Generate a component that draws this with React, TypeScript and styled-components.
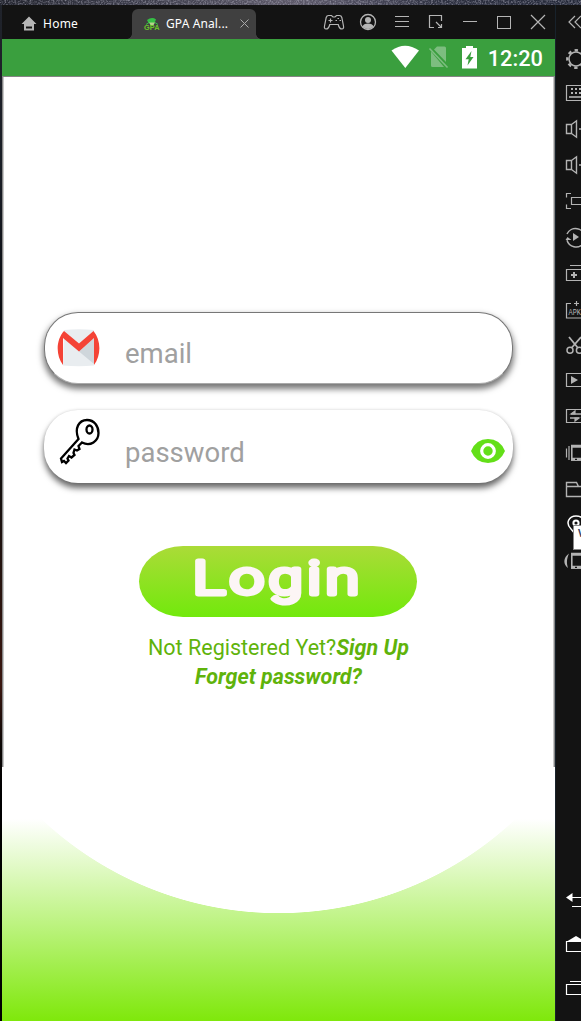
import React from 'react';
import styled, { createGlobalStyle, css } from 'styled-components';

const Global = createGlobalStyle`
  * { box-sizing: border-box; }
  body { margin: 0; background: #131313; overflow: hidden; }
  svg { display: block; flex: none; }
  button, input { font: inherit; border: 0; background: none; padding: 0; margin: 0; }
`;

const Desktop = styled.div`
  width: 581px;
  height: 1021px;
  overflow: hidden;
  display: flex;
  flex-direction: column;
  background: #131313;
  font-family: Roboto, sans-serif;
`;

const Wallpaper = styled.div`
  height: 5px;
  flex: none;
  overflow: hidden;
  background: linear-gradient(90deg, #23252f 0%, #393a48 22%, #5c5868 50%, #4b4a5c 62%, #2d3040 76%, #252a3a 100%);
`;

const Emulator = styled.div`
  display: flex;
  flex: 1;
  min-height: 0;
`;

const DesktopEdge = styled.div`
  width: 2px;
  background: linear-gradient(180deg, #20232b 0, #191d25 180px, #05070b 340px, #14100f 480px, #3a1710 680px, #0b0705 740px, #000 790px);
`;

const Main = styled.div`
  width: 553px;
  display: flex;
  flex-direction: column;
`;

const TitleBar = styled.header`
  height: 34px;
  flex: none;
  display: flex;
  align-items: flex-end;
  background: #131313;
  font-family: 'Noto Sans', sans-serif;
  font-size: 12px;
  color: #fff;
`;

const HomeTab = styled.div`
  width: 130px;
  height: 30px;
  padding: 0 0 1px 19px;
  display: flex;
  align-items: center;
  gap: 6px;
  letter-spacing: 0.25px;
`;

const ActiveTab = styled.div`
  position: relative;
  width: 124px;
  height: 30px;
  padding: 0 7px 1px 12px;
  display: flex;
  align-items: center;
  background: #404040;
  border-radius: 6px 6px 0 0;
  &::before, &::after {
    content: '';
    position: absolute;
    bottom: 0;
    width: 5px;
    height: 5px;
  }
  &::before {
    left: -5px;
    background: radial-gradient(circle at 0 0, transparent 4.5px, #404040 5px);
  }
  &::after {
    right: -5px;
    background: radial-gradient(circle at 100% 0, transparent 4.5px, #404040 5px);
  }
`;

const TabTitle = styled.span`
  width: 76px;
  margin-left: 6px;
  white-space: nowrap;
  letter-spacing: 0.12px;
`;

const WindowTools = styled.div`
  margin-left: auto;
  height: 34px;
`;

const StatusBar = styled.div`
  height: 37px;
  flex: none;
  display: flex;
  align-items: center;
  justify-content: flex-end;
  padding-right: 12px;
  background: #3a9f3e;
  color: #fff;
  font-size: 21.8px;
  font-weight: 500;
`;

const Clock = styled.span`
  margin-left: 11px;
  padding-top: 1px;
  line-height: 37px;
`;

const Screen = styled.main`
  flex: 1;
  display: flex;
  flex-direction: column;
  background: #fff;
`;

const FormPanel = styled.form`
  height: 691px;
  flex: none;
  padding: 235px 41px 0 41px;
  border: solid #858585;
  border-width: 1px 1px 0;
  box-shadow: inset 1px 0 #c8c8c8, inset -1px 0 #c8c8c8;
  display: flex;
  flex-direction: column;
  align-items: center;
`;

const Field = styled.label<{ $outlined?: boolean }>`
  width: 469px;
  height: 72px;
  flex: none;
  display: flex;
  align-items: center;
  padding: 0 9px 0 12px;
  border-radius: 34px;
  background: #fff;
  ${({ $outlined }) =>
    $outlined
      ? css`
          border: 1.5px solid #777;
          border-bottom-color: #aaa;
          box-shadow: 0 4px 6px 1px #777;
        `
      : css`
          height: 73px;
          margin-top: 26px;
          box-shadow: 0 5px 6px 0 #666, 0 0 3px #ddd;
        `}
`;

const FieldInput = styled.input`
  width: 346px;
  height: 40px;
  margin: 11px 0 0 24px;
  font-size: 27.5px;
  outline: none;
  color: #555;
  &::placeholder { color: #a0a0a0; opacity: 1; }
`;

const KeyIcon = styled.svg`
  margin-top: -13px;
`;

const RevealButton = styled.button`
  margin-top: 9px;
`;

const LoginButton = styled.button`
  width: 278px;
  height: 71px;
  flex: none;
  margin: 63px 1px 0 0;
  border-radius: 44px / 35.5px;
  background: linear-gradient(180deg, #abdb38 0%, #72e90c 100%);
`;

const Links = styled.div`
  margin-top: 16px;
  color: #5fb30b;
  font-size: 21.5px;
  line-height: 29px;
  text-align: center;
  white-space: nowrap;
`;

const LinkText = styled.a`
  font-weight: 700;
  font-style: italic;
`;

const Footer = styled.div`
  flex: 1;
  background: radial-gradient(circle 346px at 276.5px -199.5px, #fff 345.3px, transparent 346px),
    linear-gradient(180deg, #fff 52px, #7fe80b 254px);
`;

const SideBar = styled.aside`
  width: 26px;
  flex: none;
  display: flex;
  flex-direction: column;
  background: #131313;
  border-left: 1px solid #18222b;
  overflow: hidden;
`;

const SideTool = styled.div<{ $tall?: boolean }>`
  position: relative;
  height: ${({ $tall }) => ($tall ? 44 : 36)}px;
  flex: none;
  margin-left: -1px;
`;

const SideHead = styled.div`
  height: 34px;
  flex: none;
  margin-left: -1px;
`;

const SideBottom = styled.div`
  margin-top: auto;
  padding-bottom: 11px;
`;

const Tip = styled.div`
  position: absolute;
  z-index: 2;
  left: 18px;
  top: 18px;
  width: 30px;
  height: 25px;
  padding-left: 4px;
  border: 1px solid #888;
  background: #fff;
  color: #35405c;
  font: 700 10px/15px 'Noto Sans', sans-serif;
`;

const Stroke = ({ children, h = 36, color = '#b3b3b3' }: { children: React.ReactNode; h?: number; color?: string }) => (
  <svg width="26" height={h} viewBox={`0 0 26 ${h}`} fill="none" stroke={color} strokeWidth="1.2">
    {children}
  </svg>
);

const Phone = () => (
  <g>
    <rect x="16.8" y="11" width="12" height="14" strokeWidth="1.6" />
    <path d="M16 11.2h12M16 24.2h12" strokeWidth="3" />
    <path d="M20 24.3h2" stroke="#131313" />
  </g>
);

const Speaker = () => <path d="M11.5 13.5h5v9h-5zM16.5 13.5l5-3.7v16.4l-5-3.7M24 18h2" strokeWidth="1.4" />;

const sideTools: React.ReactNode[] = [
  <g key="gear">
    <circle cx="21" cy="20" r="7" strokeWidth="1.5" />
    <circle cx="21" cy="20" r="8.7" strokeWidth="2.4" strokeDasharray="3.4 3.433" strokeDashoffset="1.7" />
  </g>,
  <g key="keyboard">
    <path d="M27 10.5H11.5v15H27" />
    <path d="M16 14h10M16 18h10" strokeWidth="2" strokeDasharray="2 2" />
    <path d="M14 22h13" strokeWidth="1.6" />
  </g>,
  <Speaker key="up" />,
  <Speaker key="down" />,
  <path key="full" d="M16 10.5h-4.5v4M16 25.5h-4.5v-4M27 14.5H16.5v7H27" />,
  <g key="sync">
    <path d="M12 15a9.5 9.5 0 0 1 18 3M12 21.2A9.5 9.5 0 0 0 28 25" strokeWidth="1.5" />
    <path d="M18 14v8l6-4zM10.5 21h6l-4-3z" fill="#b3b3b3" stroke="none" />
  </g>,
  <g key="multi">
    <path d="M15 10.5h11M27 14.5H11.5v11H27" />
    <path d="M16 20h6M19 17v6" strokeWidth="2" />
  </g>,
  <g key="apk">
    <path d="M16 12.5h-4.5v14.5H27M19 12.5h5M21.5 10v5" />
    <text x="13.5" y="24" fill="#b3b3b3" stroke="none" fontSize="9.5" fontFamily="Liberation Mono, monospace" textLength="12.4" lengthAdjust="spacingAndGlyphs">APK</text>
  </g>,
  <g key="scissors">
    <circle cx="15" cy="23.3" r="3" strokeWidth="1.5" />
    <circle cx="24.4" cy="23.3" r="3" strokeWidth="1.5" />
    <path d="M14 10l9 11M26 10l-9.5 11" strokeWidth="1.8" />
  </g>,
  <g key="video">
    <path d="M27 10.5H11.5v13H27" />
    <path d="M16 13v8l7-4z" fill="#b3b3b3" stroke="none" />
  </g>,
  <g key="transfer">
    <path d="M27 10.5H11.5v13H27" />
    <path d="M16 15h10M15 19h9" strokeWidth="1.6" />
    <path d="M16 15l4-3v3zM24 19l-4 3v-3z" fill="#b3b3b3" />
  </g>,
  <g key="shake"><path d="M11.5 13.5v9M14 11v14" /><Phone /></g>,
  <path key="folder" d="M27 25.5H11.5v-14h10l2 4H27M11.5 15.5H24" strokeWidth="1.4" />,
  <g key="location" stroke="#fff">
    <path d="M16 22c-6-6-2-13 5-13s12 7 5 13l-5 6z" strokeWidth="1.5" />
    <circle cx="21" cy="16" r="2.600" strokeWidth="2" />
  </g>,
  <g key="rotate"><path d="M14 10.5c-6 4-6 11 -1 14.500-1.500-5-1.500-9 1-14.500z" fill="#b3b3b3" stroke="none" /><Phone /></g>,
];

export default function App() {
  return (
    <Desktop>
      <Global />
      <Wallpaper>
        <svg width="581" height="5">
          <filter id="grain">
            <feTurbulence type="fractalNoise" baseFrequency="0.6" numOctaves="2" seed="4" />
            <feColorMatrix values="0 0 0 0 .55  0 0 0 0 .54  0 0 0 0 .64  1.2 0 0 0 -.48" />
          </filter>
          <rect width="581" height="5" filter="url(#grain)" />
        </svg>
      </Wallpaper>
      <Emulator>
        <DesktopEdge />
        <Main>
          <TitleBar>
            <HomeTab>
              <svg width="16" height="15" viewBox="0 0 16 15" fill="#b5b5b5">
                <path fillRule="evenodd" d="M8 .5L.5 8H3v6.5h10V8h2.500zM5 10.500h6v2H5z" />
              </svg>
              <span>Home</span>
            </HomeTab>
            <ActiveTab>
              <svg width="16" height="14" viewBox="0 0 16 14">
                <path d="M3 3Q8-.5 12 2.500L10.500 6h-6z" fill="#35bf45" />
                <path d="M5 5.500h6L9 9H7z" fill="#b7d58b" />
                <path d="M2 7.500l3-2M14 7.500l-3-2" stroke="#35bf45" />
                <text x="0" y="13" fontSize="8" fontWeight="700" textLength="15.500" lengthAdjust="spacingAndGlyphs" fontFamily="Liberation Sans, sans-serif" fill="#6ac42a">GPA</text>
              </svg>
              <TabTitle>GPA Anal...</TabTitle>
              <svg width="9" height="9" viewBox="0 0 9 9" stroke="#aaa" strokeWidth="1">
                <path d="M.5.5l8 8M8.500.5l-8 8" />
              </svg>
            </ActiveTab>
            <WindowTools>
              <svg width="233" height="34" viewBox="322 5 233 34" fill="none" stroke="#b5b5b5" strokeWidth="1.200">
                <path d="M329 15.500h2.500l1.500 1.500h2l1.500-1.500h3c1.500 0 2 .8 2.300 2l1.700 8.500c.4 2-.3 3-1.500 3-2 0-3-1.200-3.800-4.500h-8.400c-.8 3.300-1.800 4.500-3.800 4.500-1.200 0-1.900-1-1.500-3l1.700-8.500c.3-1.200.8-2 2.300-2z" />
                <path d="M328.500 20.500h4M330.500 18.500v4M335.500 20.500h1.500M337.500 18.500h1.500M339.500 20.500h1.500" />
                <circle cx="368" cy="22" r="7.500" strokeWidth="1.300" />
                <circle cx="368" cy="20" r="3" fill="#b5b5b5" stroke="none" />
                <path d="M362.500 26.500q1-3 5.500-3t5.500 3q-5.500 5-11 0z" fill="#b5b5b5" stroke="none" />
                <path d="M395 16.500h14M395 21.500h14M395 26.500h14M463 21.500h14" strokeWidth="1" />
                <path d="M434 27.500h-4.500v-12h12V21M436 22l5.500 5.500M441.500 24v3.500H438" />
                <rect x="497.500" y="16.500" width="13" height="12" strokeWidth="1" />
                <path d="M531 15l14 14M545 15l-14 14" />
              </svg>
            </WindowTools>
          </TitleBar>
          <StatusBar>
            <svg width="88" height="37" viewBox="389 39 88 37" fill="#fff">
              <path d="M391.500 50.500q13.500-9.500 27.500 0L405.300 68z" />
              <path d="M434 49.500l3-3h7.500q1.500 0 1.500 1.500v14zM431 51.500v14q0 1.500 1.500 1.500H444z" fill="#7dbd80" />
              <path d="M429.500 48.500l18 19" stroke="#7dbd80" strokeWidth="1.600" />
              <path fillRule="evenodd" d="M466 46h7v2h4v20.500h-15V48h4zM471.500 51l-6 8.200h3.200l-1.200 6.300 6-8.500h-3.200z" />
            </svg>
            <Clock>12:20</Clock>
          </StatusBar>
          <Screen>
            <FormPanel>
              <Field $outlined>
                <svg width="44" height="38" viewBox="0 0 44 38">
                  <path d="M7 1Q22-.5 37 1V36.500Q22 38 6 36.500z" fill="#e9edf0" />
                  <path d="M22 22.500L37 9v26z" fill="#cfd6db" />
                  <path d="M7 2l15 12.500L36.500 2c7.500 9 8 24 .5 34V9L22 22.500 6 9v27C-1.500 26-1 11 7 2z" fill="#f44336" />
                </svg>
                <FieldInput placeholder="email" />
              </Field>
              <Field>
                <KeyIcon width="45" height="50" viewBox="57 415 45 50" fill="none" stroke="#000" strokeWidth="2.300">
                  <path d="M79.500 439C75 428 80 420 88 420c7.500 0 11.500 6.500 11.500 13 0 8-8 14-16.500 9.500l-3.500 3.500 1 3-2.500 1.500-2.500-1-1 3.500 1 2-3 2.500-2.500-1.500-1.500 2.500 1 2-2.500 2.500-2-2-2 1-1-3.500z" />
                  <ellipse cx="90.500" cy="429.500" rx="3" ry="4" />
                </KeyIcon>
                <FieldInput type="text" placeholder="password" />
                <RevealButton type="button" aria-label="Show password">
                  <svg width="34" height="24" viewBox="0 0 34 24">
                    <path d="M0 12Q5 0 17 0t17 12q-5 12-17 12T0 12z" fill="#63df18" />
                    <circle cx="17" cy="12" r="6.300" fill="none" stroke="#fff" strokeWidth="3.200" />
                  </svg>
                </RevealButton>
              </Field>
              <LoginButton type="button">
                <svg width="278" height="71" viewBox="0 0 278 71">
                  <text transform="translate(54 47.500) scale(1.340 1)" fontFamily="Roboto, sans-serif" fontWeight="300" fontSize="45.500" letterSpacing="3.500" fill="#fcf5f5" stroke="#fcf5f5" strokeWidth="5" strokeLinejoin="round">Login</text>
                </svg>
              </LoginButton>
              <Links>
                Not Registered Yet?<LinkText>Sign Up</LinkText>
                <br />
                <LinkText>Forget password?</LinkText>
              </Links>
            </FormPanel>
            <Footer />
          </Screen>
        </Main>
        <SideBar>
          <SideHead>
            <Stroke h={34}><path d="M20 11l-6 6 6 6M26 11l-6 6 6 6" /></Stroke>
          </SideHead>
          {sideTools.map((icon, i) => (
            <SideTool key={i}>
              <Stroke>{icon}</Stroke>
              {i === 13 && <Tip>V</Tip>}
            </SideTool>
          ))}
          <SideBottom>
            <SideTool $tall>
              <Stroke h={44} color="#fff">
                <path d="M16 19.500h11M17 28.500h10" />
                <path d="M11 19.500l6.500-4.500v9z" fill="#fff" stroke="none" />
              </Stroke>
            </SideTool>
            <SideTool $tall>
              <Stroke h={44} color="#fff">
                <path d="M27 29.500H11.500v-10H27" />
                <path d="M11 20l10-6 10 6z" fill="#fff" stroke="none" />
              </Stroke>
            </SideTool>
            <SideTool $tall>
              <Stroke h={44} color="#fff"><path d="M15 15.500h12M27 28.500H11.500v-10H27" /></Stroke>
            </SideTool>
          </SideBottom>
        </SideBar>
      </Emulator>
    </Desktop>
  );
}
